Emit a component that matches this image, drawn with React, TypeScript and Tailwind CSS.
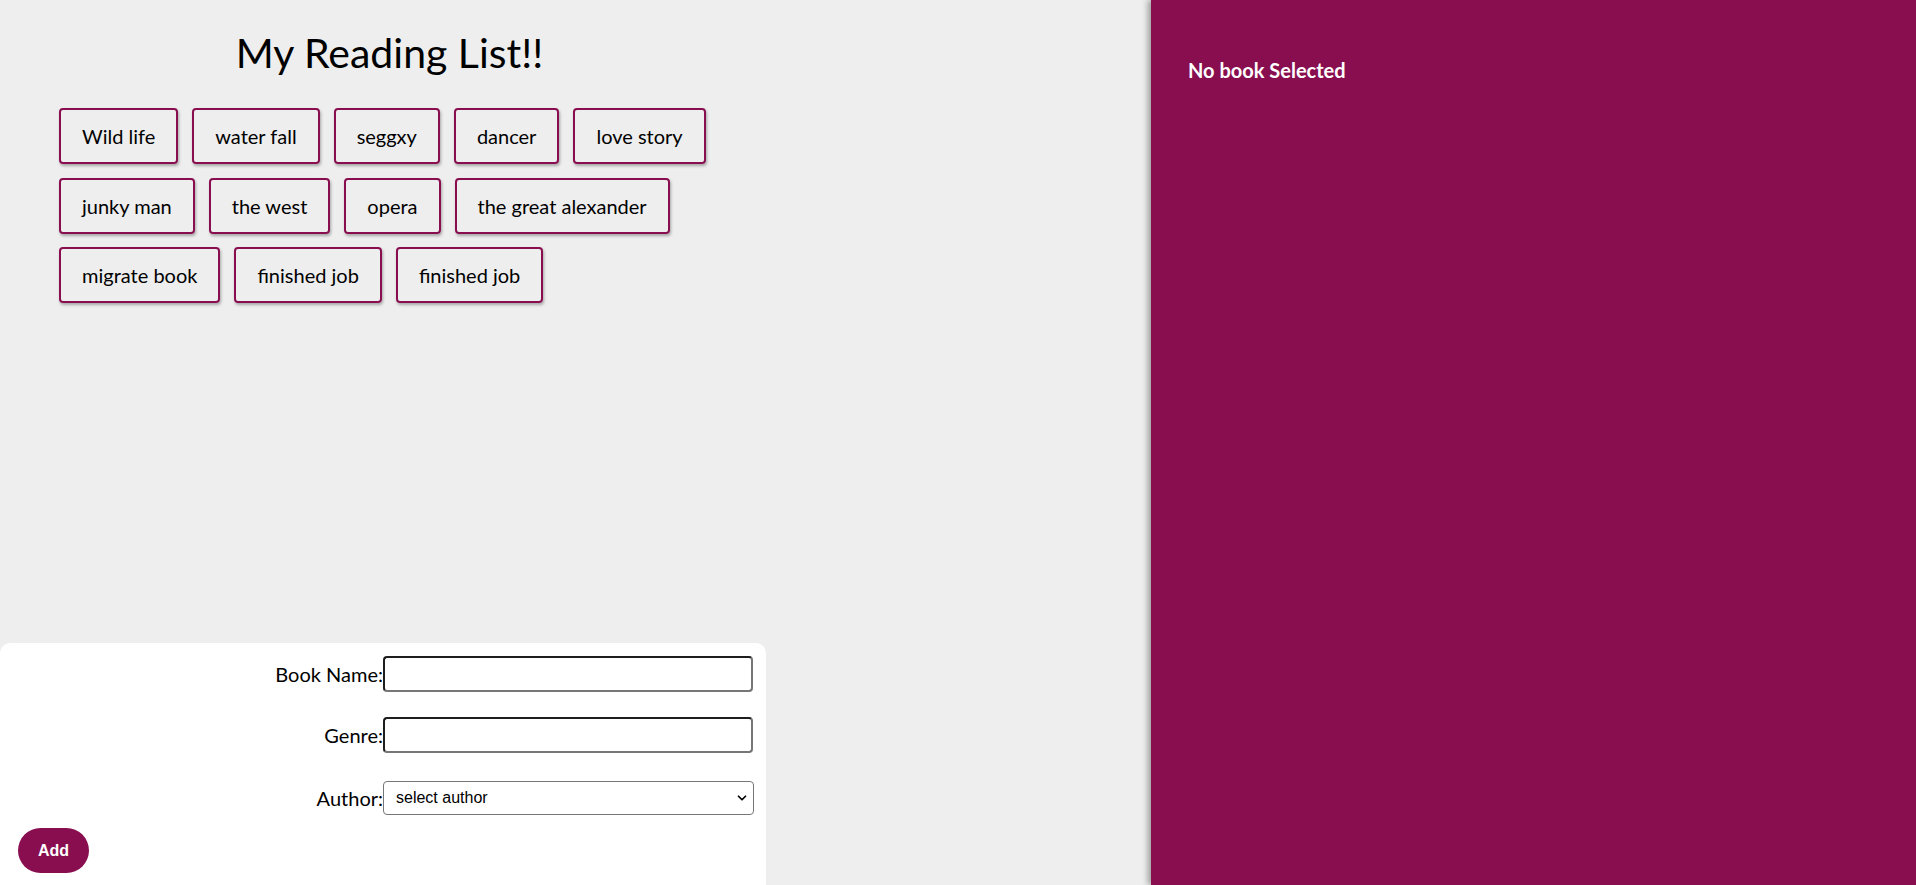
import { ChevronDown } from "lucide-react";

const BOOKS = [
  "Wild life",
  "water fall",
  "seggxy",
  "dancer",
  "love story",
  "junky man",
  "the west",
  "opera",
  "the great alexander",
  "migrate book",
  "finished job",
  "finished job",
];

function Field({ label, children }: { label: string; children: React.ReactNode }) {
  return (
    <div className="flex items-center">
      <label className="w-1/2 text-right text-[20px] leading-[24px] text-black">{label}</label>
      {children}
    </div>
  );
}

export default function App() {
  return (
    <div className="flex h-screen w-full overflow-hidden bg-[#eeeeee] font-['Lato',sans-serif]">
      {/* Book list + form */}
      <main className="flex flex-1 flex-col">
        <div className="w-[779px]">
          <h1 className="pt-[29px] text-center text-[41px] leading-[48px] text-black">
            My Reading List!!
          </h1>

          <ul className="mt-[31px] flex flex-wrap gap-x-[14px] gap-y-[13.5px] pl-[59px] pr-[20px]">
            {BOOKS.map((book, index) => (
              <li
                key={index}
                className="rounded-[4px] border-2 border-[#880e4f] px-[21px] py-[14px] text-[20px] leading-[24px] text-black shadow-[1px_2px_3px_rgba(0,0,0,0.3)] cursor-pointer"
              >
                {book}
              </li>
            ))}
          </ul>
        </div>

        {/* Add book form */}
        <form className="mt-auto flex h-[242px] w-[766px] flex-col rounded-t-[10px] bg-white pt-[13px]">
          <Field label="Book Name:">
            <input
              type="text"
              className="h-[36px] w-[370px] rounded-[4px] border-2 border-t-[#1e1e1e] border-l-[#1e1e1e] border-b-[#767676] border-r-[#767676] bg-white"
            />
          </Field>
          <div className="mt-[25px]">
            <Field label="Genre:">
              <input
                type="text"
                className="h-[36px] w-[370px] rounded-[4px] border-2 border-t-[#1e1e1e] border-l-[#1e1e1e] border-b-[#767676] border-r-[#767676] bg-white"
              />
            </Field>
          </div>
          <div className="mt-[28px]">
            <Field label="Author:">
              <div className="relative w-[371px]">
                <select className="h-[34px] w-full appearance-none rounded-[4px] border border-[#767676] bg-white pl-[12px] font-['Liberation_Sans',sans-serif] text-[16px] text-black">
                  <option>select author</option>
                </select>
                <ChevronDown
                  size={14}
                  strokeWidth={3}
                  className="pointer-events-none absolute right-[5px] top-[10px] text-black"
                />
              </div>
            </Field>
          </div>
          <div className="mt-[13px] pl-[18px]">
            <button
              type="button"
              className="h-[45px] w-[71px] rounded-full bg-[#880e4f] font-['Liberation_Sans',sans-serif] text-[16px] font-bold text-white"
            >
              Add
            </button>
          </div>
        </form>
      </main>

      {/* Book details */}
      <aside className="h-full w-[765px] shrink-0 bg-[#880e4f] pl-[37px] pt-[58px] text-white shadow-[-3px_0_6px_rgba(0,0,0,0.35)]">
        <p className="text-[20px] font-bold leading-[24px]">No book Selected</p>
      </aside>
    </div>
  );
}
